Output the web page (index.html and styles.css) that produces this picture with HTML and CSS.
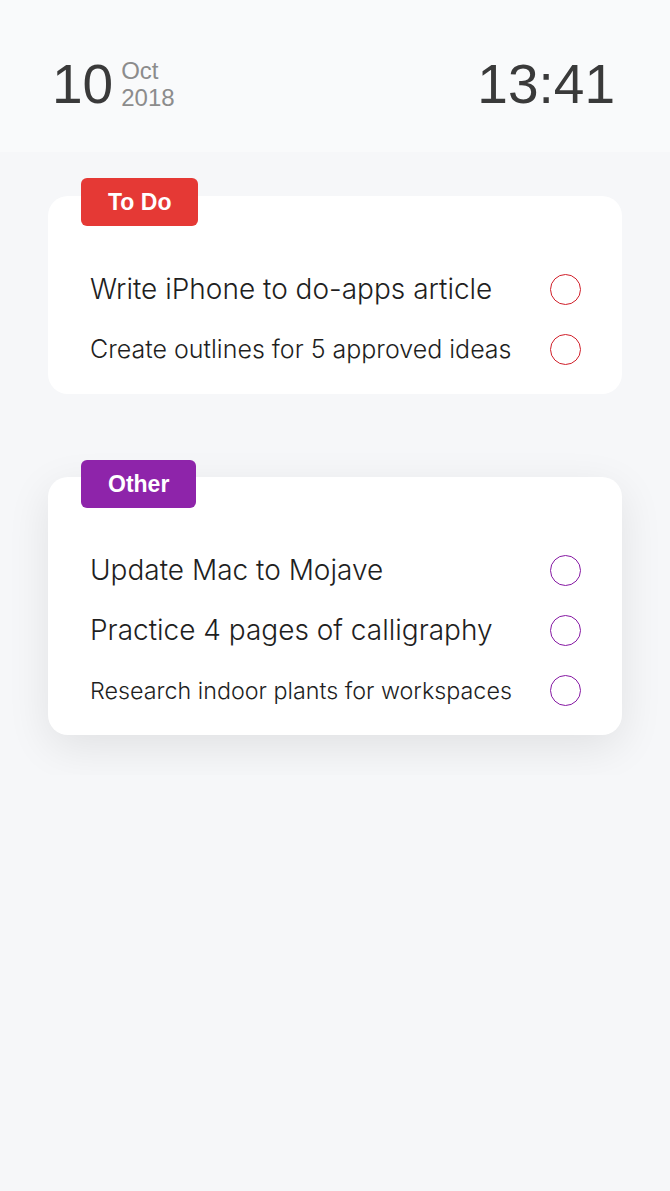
FILE: index.html
```html
<!DOCTYPE html>
<html lang="en">
<head>
    <meta charset="UTF-8">
    <meta name="viewport" content="width=device-width, initial-scale=1.0">
    <title>To Do</title>
    <link rel="stylesheet" href="styles.css">
</head>
<body>
    <div class="header">
        <div class="date">
            <span class="day">10</span>
            <div class="month">
                <span>Oct</span>
                <span>2018</span>
            </div>
        </div>
        <div class="time">13:41</div>
    </div>

    <div class="lists">
        <div class="group">
            <div class="badge red">To Do</div>
            <div class="card">
                <div class="row big">
                    <span>Write iPhone to do-apps article</span>
                    <span class="check red-check"></span>
                </div>
                <div class="row">
                    <span>Create outlines for 5 approved ideas</span>
                    <span class="check red-check"></span>
                </div>
            </div>
        </div>

        <div class="group second">
            <div class="badge purple">Other</div>
            <div class="card shadow">
                <div class="row big">
                    <span>Update Mac to Mojave</span>
                    <span class="check purple-check"></span>
                </div>
                <div class="row big">
                    <span>Practice 4 pages of calligraphy</span>
                    <span class="check purple-check"></span>
                </div>
                <div class="row small">
                    <span>Research indoor plants for workspaces</span>
                    <span class="check purple-check"></span>
                </div>
            </div>
        </div>
    </div>
</body>
</html>
```

FILE: styles.css
```css
body{
    margin: 0;
    padding: 0;
    background-color: #f6f7f9;
    font-family: "Inter", "Roboto", sans-serif;
}
.header{
    height: 152px;
    box-sizing: border-box;
    background-color: #f9fafb;
    display: flex;
    justify-content: space-between;
    align-items: center;
    padding: 16px 55px 0 52px;
    font-family: "Liberation Sans", Arial, sans-serif;
}
.date{
    display: flex;
    align-items: center;
    gap: 8px;
}
.day{
    font-size: 55px;
    color: #3a3a3a;
}
.month{
    display: flex;
    flex-direction: column;
    font-size: 24px;
    line-height: 27px;
    color: #8c8c8c;
}
.time{
    font-size: 55px;
    color: #3a3a3a;
}
.lists{
    padding: 26px 48px 40px 48px;
}
.group{
    display: flex;
    flex-direction: column;
}
.second{
    margin-top: 66px;
}
.badge{
    align-self: flex-start;
    margin-left: 33px;
    height: 48px;
    padding: 0 27px;
    border-radius: 6px;
    color: #fff;
    font-family: "Liberation Sans", Arial, sans-serif;
    font-weight: 700;
    font-size: 23px;
    line-height: 48px;
    position: relative;
    z-index: 1;
}
.red{
    background-color: #e53935;
}
.purple{
    background-color: #8e24aa;
}
.card{
    margin-top: -30px;
    background-color: #fff;
    border-radius: 20px;
    padding: 63px 41px 15px 42px;
}
.shadow{
    margin-top: -31px;
    box-shadow: 0 12px 44px rgba(0,0,0,0.09);
}
.row{
    height: 60px;
    display: flex;
    justify-content: space-between;
    align-items: center;
    font-size: 25px;
    font-weight: 300;
    color: #1f1f1f;
}
.big{
    font-size: 28px;
}
.small{
    font-size: 23.3px;
}
.check{
    width: 29px;
    height: 29px;
    border-radius: 50%;
    border: 1.6px solid;
}
.red-check{
    border-color: #d01f2a;
}
.purple-check{
    border-color: #8619a3;
}
```
